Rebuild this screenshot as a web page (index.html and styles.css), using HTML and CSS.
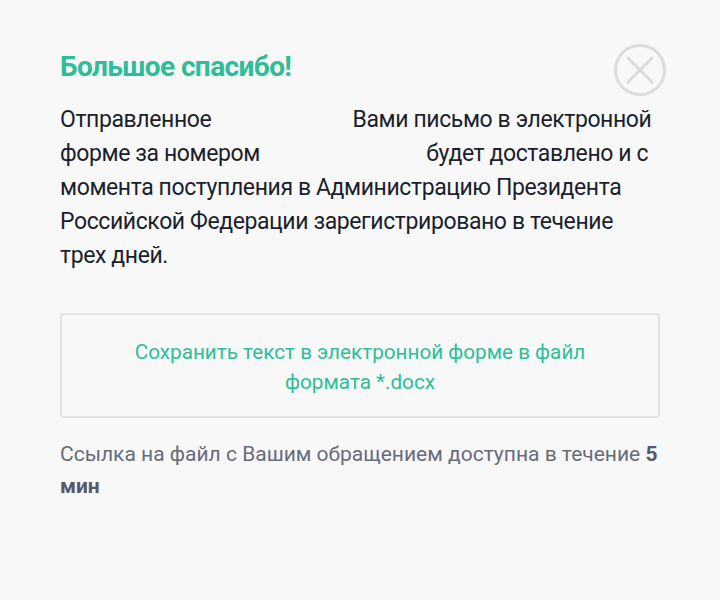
FILE: index.html
```html
<!DOCTYPE html>
<html lang="ru">
<head>
<meta charset="utf-8">
<link rel="stylesheet" href="styles.css">
</head>
<body>
<div class="modal">
  <div class="head">
    <h1 class="title">Большое спасибо!</h1>
    <button class="close" aria-label="Закрыть">
      <svg width="54" height="54" viewBox="0 0 54 54"><circle cx="27" cy="27" r="24.5" fill="none" stroke="#dcdcdc" stroke-width="3"/><path d="M15 15 L39 39 M39 15 L15 39" stroke="#dcdcdc" stroke-width="3" stroke-linecap="round"/></svg>
    </button>
  </div>
  <p class="text">Отправленное <span class="gap g1">Вами</span> письмо в электронной форме за номером <span class="gap g2">будет</span> доставлено и с момента поступления в Администрацию Президента Российской Федерации зарегистрировано в течение трех дней.</p>
  <div class="save">Сохранить текст в электронной форме в файл<br>формата *.docx</div>
  <p class="note">Ссылка на файл с Вашим обращением доступна в течение <b>5</b> <b>мин</b></p>
</div>
</body>
</html>
```
FILE: styles.css
```css
html, body { margin: 0; padding: 0; background: #f8f8f8; }
body { width: 720px; height: 600px; font-family: Roboto, "Noto Sans", sans-serif; }
.modal { padding: 43px 60px 0 60px; }
.head { display: flex; justify-content: space-between; align-items: flex-start; }
.title { margin: 8px 0 0 0; font-size: 28px; font-weight: 700; color: #2dbe98; line-height: 32px; letter-spacing: -0.6px; }
.close { border: 0; background: none; padding: 0; margin: 0 -7px 0 0; width: 54px; height: 54px; }
.close svg { display: block; }
.text { margin: 6px 0 0 0; font-size: 23px; line-height: 34px; color: #1b1f2d; letter-spacing: -0.4px; }
.gap { margin-left: 136px; }
.g2 { margin-left: 161px; }
.save { margin-top: 40px; border: 2px solid #e3e3e3; border-radius: 3px; padding: 22px 0 19px; text-align: center; color: #2dbe98; font-size: 20.7px; line-height: 30px; }
.note { margin: 20px 0 0 0; font-size: 21px; line-height: 32px; color: #676b7b; }
.note b { color: #555a6a; }
```
